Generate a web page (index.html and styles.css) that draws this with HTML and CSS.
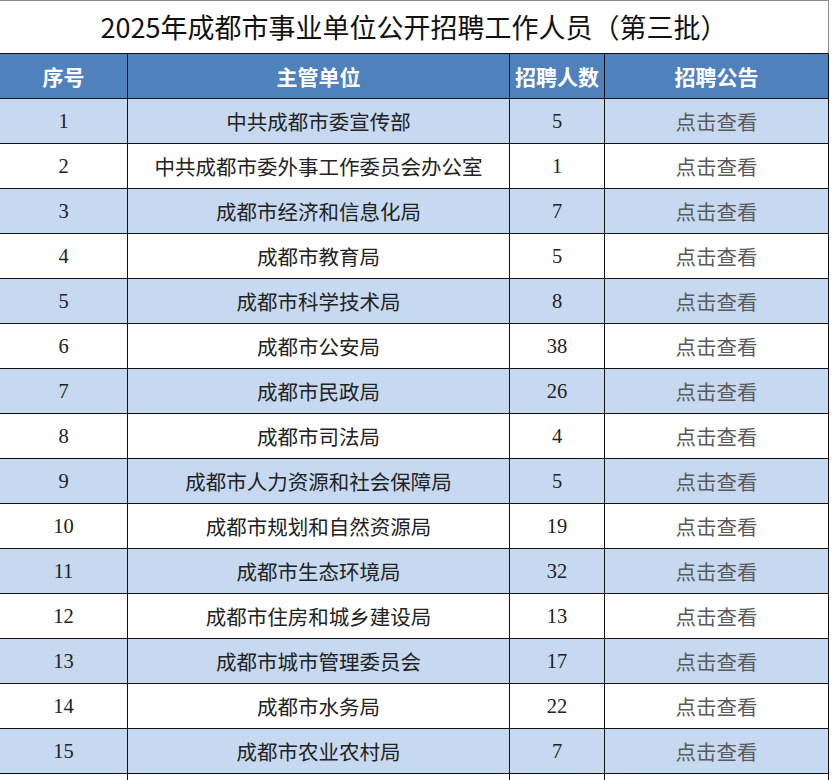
FILE: index.html
```html
<!DOCTYPE html>
<html lang="zh-CN">
<head>
<meta charset="utf-8">
<title>2025年成都市事业单位公开招聘工作人员（第三批）</title>
<link rel="stylesheet" href="styles.css">
</head>
<body>
<div class="sheet">
  <div class="title">2025年成都市事业单位公开招聘工作人员（第三批）</div>
  <div class="row head">
    <div class="cell">序号</div>
    <div class="cell">主管单位</div>
    <div class="cell">招聘人数</div>
    <div class="cell">招聘公告</div>
  </div>
  <div class="row alt"><div class="cell num">1</div><div class="cell">中共成都市委宣传部</div><div class="cell num">5</div><div class="cell link">点击查看</div></div>
  <div class="row"><div class="cell num">2</div><div class="cell">中共成都市委外事工作委员会办公室</div><div class="cell num">1</div><div class="cell link">点击查看</div></div>
  <div class="row alt"><div class="cell num">3</div><div class="cell">成都市经济和信息化局</div><div class="cell num">7</div><div class="cell link">点击查看</div></div>
  <div class="row"><div class="cell num">4</div><div class="cell">成都市教育局</div><div class="cell num">5</div><div class="cell link">点击查看</div></div>
  <div class="row alt"><div class="cell num">5</div><div class="cell">成都市科学技术局</div><div class="cell num">8</div><div class="cell link">点击查看</div></div>
  <div class="row"><div class="cell num">6</div><div class="cell">成都市公安局</div><div class="cell num">38</div><div class="cell link">点击查看</div></div>
  <div class="row alt"><div class="cell num">7</div><div class="cell">成都市民政局</div><div class="cell num">26</div><div class="cell link">点击查看</div></div>
  <div class="row"><div class="cell num">8</div><div class="cell">成都市司法局</div><div class="cell num">4</div><div class="cell link">点击查看</div></div>
  <div class="row alt"><div class="cell num">9</div><div class="cell">成都市人力资源和社会保障局</div><div class="cell num">5</div><div class="cell link">点击查看</div></div>
  <div class="row"><div class="cell num">10</div><div class="cell">成都市规划和自然资源局</div><div class="cell num">19</div><div class="cell link">点击查看</div></div>
  <div class="row alt"><div class="cell num">11</div><div class="cell">成都市生态环境局</div><div class="cell num">32</div><div class="cell link">点击查看</div></div>
  <div class="row"><div class="cell num">12</div><div class="cell">成都市住房和城乡建设局</div><div class="cell num">13</div><div class="cell link">点击查看</div></div>
  <div class="row alt"><div class="cell num">13</div><div class="cell">成都市城市管理委员会</div><div class="cell num">17</div><div class="cell link">点击查看</div></div>
  <div class="row"><div class="cell num">14</div><div class="cell">成都市水务局</div><div class="cell num">22</div><div class="cell link">点击查看</div></div>
  <div class="row alt"><div class="cell num">15</div><div class="cell">成都市农业农村局</div><div class="cell num">7</div><div class="cell link">点击查看</div></div>
  <div class="row"><div class="cell num"></div><div class="cell"></div><div class="cell num"></div><div class="cell link"></div></div>
</div>
</body>
</html>
```
FILE: styles.css
```css
html, body {
  margin: 0;
  padding: 0;
  background: #ffffff;
  overflow: hidden;
}
body {
  width: 834px;
  height: 780px;
  font-family: "Noto Sans CJK SC", "Noto Sans", sans-serif;
  color: #1a1a1a;
}
.sheet {
  width: 829px;
}
.title {
  box-sizing: border-box;
  height: 54px;
  border-top: 1px solid #8c8c8c;
  border-right: 1px solid #8c8c8c;
  border-bottom: 1px solid #111111;
  display: flex;
  align-items: center;
  justify-content: center;
  font-size: 27px;
  font-weight: 400;
  color: #111111;
  padding-bottom: 2px;
}
.row {
  display: grid;
  grid-template-columns: 128px 382px 95px 224px;
  height: 45px;
  background: #ffffff;
}
.row.alt {
  background: #c6d9f0;
}
.row.head {
  background: #4f81bd;
}
.cell {
  box-sizing: border-box;
  border-right: 1px solid #111111;
  border-bottom: 1px solid #111111;
  display: flex;
  align-items: center;
  justify-content: center;
  font-size: 20.5px;
  color: #222222;
  white-space: nowrap;
}
.head .cell {
  color: #ffffff;
  font-weight: 700;
  font-size: 21px;
}
.cell.num {
  font-family: "Liberation Serif", "DejaVu Serif", serif;
  font-size: 20.5px;
}
.cell.link {
  color: #5a5a5a;
}
```
